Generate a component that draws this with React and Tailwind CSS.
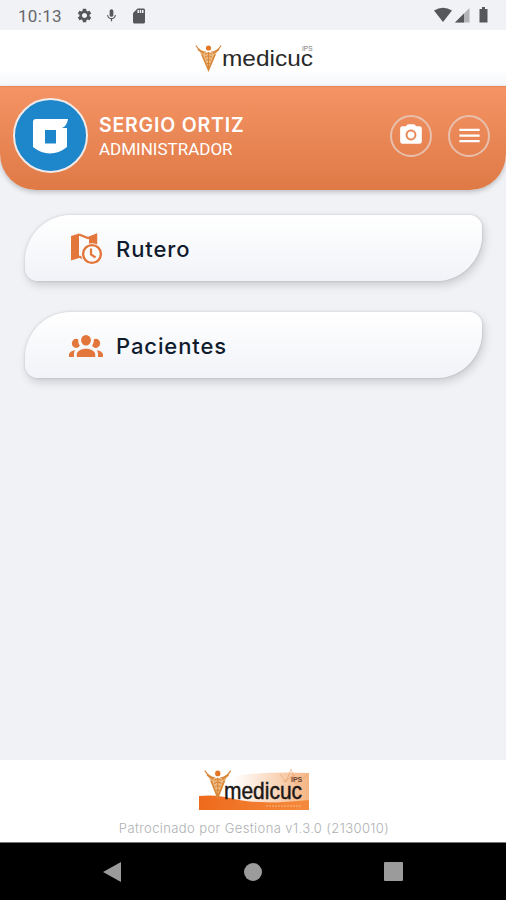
import { MdSettings, MdMic, MdSdCard, MdPhotoCamera, MdMenu } from 'react-icons/md';

function StatusBar() {
  return (
    <div className="h-[30px] shrink-0 flex items-center justify-between pl-[18px] pr-[15px] text-[#55575b] bg-[#f0f2f6]">
      <div className="flex items-center pt-px">
        <span className="w-[58px] font-[Roboto] text-[17px] leading-5 tracking-[0.3px] text-[#66686c]">10:13</span>
        <MdSettings className="w-[17px] h-[17px]" />
        <MdMic className="ml-[11px] w-[15px] h-[15px]" />
        <MdSdCard className="ml-[11px] w-[18px] h-[18px]" />
      </div>
      <svg width="58" height="18" viewBox="0 0 58 18" fill="currentColor">
        <path d="M1 4.5Q10 -1 19 4.5L10 16Z" />
        <path d="M36.5 2V16.5H22Z" opacity="0.4" />
        <path d="M31 7.5V16.5H22Z" />
        <path d="M46.5 3H49V1H52V3H54.5V16.5H46.5Z" />
      </svg>
    </div>
  );
}

// Winged figure used in both versions of the brand mark
function Figure() {
  return (
    <g fill="none" stroke="#d98637">
      <circle cx="13.5" cy="4" r="2.6" fill="#e27624" stroke="none" />
      <path d="M.8 1.5Q5 8 11 8.2M26.2 1.5Q22 8 16 8.2" strokeWidth="1.2" />
      <path d="M5 8.5H22L13.5 26Z" fill="#edbd87" stroke="none" />
      <path d="M3 5.2Q7 9 9.4 9.2M7 10.5L13.5 26 20 10.5M17.6 9.2Q20 9 24 5.2" strokeWidth="1.6" />
      <path d="M13.5 8V25M10 10.5Q13.5 7.5 17 10.5M10 13.5Q13.5 10 17 13.5M11 16.5Q13.5 13.5 16 16.5M12 20Q13.5 17.5 15 20" strokeWidth="1.1" />
    </g>
  );
}

function TopLogo() {
  return (
    <svg width="120" height="30" viewBox="0 0 120 30">
      <g transform="translate(0 1)"><Figure /></g>
      <text x="27" y="23" fontFamily="'Liberation Sans', sans-serif" fontSize="22" textLength="91" lengthAdjust="spacingAndGlyphs" fill="#292929">medicuc</text>
      <text x="107" y="8" fontFamily="'Liberation Sans', sans-serif" fontSize="6.5" fill="#777">IPS</text>
    </svg>
  );
}

function FooterLogo() {
  return (
    <svg width="111" height="43" viewBox="0 0 111 43">
      <defs>
        <linearGradient id="haze">
          <stop offset="0" stopColor="#fff" />
          <stop offset="1" stopColor="#f5b583" />
        </linearGradient>
        <linearGradient id="wave">
          <stop offset="0" stopColor="#ee6a1c" />
          <stop offset="1" stopColor="#f58a3c" />
        </linearGradient>
      </defs>
      <path d="M34 8Q70 3 110 5V34H34Z" fill="url(#haze)" />
      <path d="M81 6l6 8 5-13 5 15 11-9M84 14l12-7" fill="none" stroke="#e99a62" strokeWidth="1" opacity="0.5" />
      <path d="M0 28Q18 26 35 31Q60 37 110 32V42H0Z" fill="url(#wave)" />
      <path d="M67 38H103" stroke="#ffd0a5" strokeWidth="1" strokeDasharray="2 1" opacity="0.7" />
      <g transform="translate(5 1) scale(1.02 1.1)"><Figure /></g>
      <text transform="translate(25 31) scale(1 1.17)" fontFamily="'Liberation Sans', sans-serif" fontSize="21" textLength="78" lengthAdjust="spacingAndGlyphs" fill="#1c1715" stroke="#1c1715" strokeWidth="0.4">medicuc</text>
      <text x="92" y="14" fontFamily="'Liberation Sans', sans-serif" fontSize="7" fontWeight="bold" fill="#6b422d">IPS</text>
    </svg>
  );
}

function MapClockIcon() {
  return (
    <svg width="34" height="33" viewBox="0 0 34 33" fill="none">
      <path d="M2 4L10 1.5V26L2 28.5Z" fill="#e2763b" />
      <path d="M10 2.5L19 6L27 3V14M10 24.5L16 27" stroke="#e2763b" strokeWidth="2.4" />
      <path d="M20 5L28 1.5V15H20Z" fill="#e2763b" />
      <circle cx="23" cy="22" r="10.8" fill="#fafbfd" />
      <circle cx="23" cy="22" r="8.9" stroke="#e2763b" strokeWidth="2.4" />
      <path d="M22 16.5V22.5L26.5 25.5" stroke="#e2763b" strokeWidth="2.2" />
    </svg>
  );
}

function GroupIcon() {
  return (
    <svg width="34" height="22" viewBox="0 5.5 24 14.5" preserveAspectRatio="none" fill="#e2763b">
      <path d="M12,5.5A3.5,3.5 0 0,1 15.5,9A3.5,3.5 0 0,1 12,12.5A3.5,3.5 0 0,1 8.5,9A3.5,3.5 0 0,1 12,5.5M5,8C5.56,8 6.08,8.15 6.53,8.42C6.38,9.85 6.8,11.27 7.66,12.38C7.16,13.34 6.16,14 5,14A3,3 0 0,1 2,11A3,3 0 0,1 5,8M19,8A3,3 0 0,1 22,11A3,3 0 0,1 19,14C17.84,14 16.84,13.34 16.34,12.38C17.2,11.27 17.62,9.85 17.47,8.42C17.92,8.15 18.44,8 19,8M5.5,18.25C5.5,16.18 8.41,14.5 12,14.5C15.59,14.5 18.5,16.18 18.5,18.25V20H5.5V18.25M0,20V18.5C0,17.11 1.89,15.94 4.45,15.6C3.86,16.28 3.5,17.22 3.5,18.25V20H0M24,20H20.5V18.25C20.5,17.22 20.14,16.28 19.55,15.6C22.11,15.94 24,17.11 24,18.5V20Z" />
    </svg>
  );
}

function MenuCard({ icon, children }) {
  return (
    <button
      type="button"
      className="h-[66px] w-full flex items-center pl-[44px] pt-px rounded-tl-[46px] rounded-tr-[13px] rounded-br-[46px] rounded-bl-[13px] bg-linear-to-b from-white to-[#f1f3f8] shadow-[0_0_2px_1px_rgba(0,0,0,0.07),2px_4px_10px_rgba(0,0,0,0.16)]"
    >
      <span className="w-[47px] flex">{icon}</span>
      <span className="text-[22px] leading-7 font-medium tracking-[0.9px] text-[#101c2e]">{children}</span>
    </button>
  );
}

export default function App() {
  return (
    <div className="h-[900px] w-full flex flex-col overflow-hidden bg-[#f0f2f6] font-[Inter,sans-serif]">
      <StatusBar />
      <div className="h-14 shrink-0 flex justify-center pt-[13px] pl-[3px] bg-linear-to-b from-white from-70% to-[#f5f7fa]">
        <TopLogo />
      </div>

      <header className="h-[104px] shrink-0 flex items-center pl-[13px] pr-4 pb-[6px] rounded-b-[36px] text-white bg-linear-to-b from-[#f49364] to-[#df7a46] border-t border-[#e88552] shadow-[0_2px_5px_rgba(0,0,0,0.22)]">
        <div className="w-[75px] h-[75px] rounded-full border-2 border-[#f1eae8] bg-[#1e87cb] flex items-center justify-center pr-0.5">
          <svg width="36" height="36" viewBox="0 0 36 36">
            <path fill="#fff" fillRule="evenodd" d="M4 1H36Q35 8 30 10H35V29Q27 35.5 18 35.5T1 29V4Q1 1 4 1ZM13 12V25.5H24V12Z" />
          </svg>
        </div>
        <div className="ml-[11px] grow pt-0.5">
          <div className="text-[19.5px] leading-6 font-semibold tracking-[0.8px]">SERGIO ORTIZ</div>
          <div className="font-[Roboto] text-[17px] leading-6">ADMINISTRADOR</div>
        </div>
        <div className="flex gap-4">
          <button type="button" className="w-[42px] h-[42px] rounded-full border-2 border-[#e8c0ae] flex items-center justify-center pb-0.5">
            <MdPhotoCamera className="w-[26px] h-[26px]" />
          </button>
          <button type="button" className="w-[42px] h-[42px] rounded-full border-2 border-[#e8c0ae] flex items-center justify-center">
            <MdMenu className="w-[27px] h-[27px]" />
          </button>
        </div>
      </header>

      <main className="grow flex flex-col gap-[31px] pt-[25px] pl-[25px] pr-6">
        <MenuCard icon={<MapClockIcon />}>Rutero</MenuCard>
        <MenuCard icon={<GroupIcon />}>Pacientes</MenuCard>
      </main>

      <footer className="h-[82px] shrink-0 flex flex-col items-center bg-white pt-2">
        <div className="pl-0.5">
          <FooterLogo />
        </div>
        <p className="mt-[9px] pl-0.5 text-[13px] leading-4 font-light tracking-[0.4px] text-[#aeb0b3] whitespace-nowrap">Patrocinado por Gestiona v1.3.0 (2130010)</p>
      </footer>

      <nav className="h-[58px] shrink-0 bg-black border-t border-[#777] flex items-center justify-between pl-[103px] pr-[103px] text-[#9b9b9b]">
        <svg width="19" height="20" viewBox="0 0 19 20" fill="currentColor"><path d="M0 10L18 0V20Z" /></svg>
        <span className="w-[18px] h-[18px] rounded-full bg-current" />
        <span className="w-[19px] h-[19px] rounded-[1px] bg-current" />
      </nav>
    </div>
  );
}
